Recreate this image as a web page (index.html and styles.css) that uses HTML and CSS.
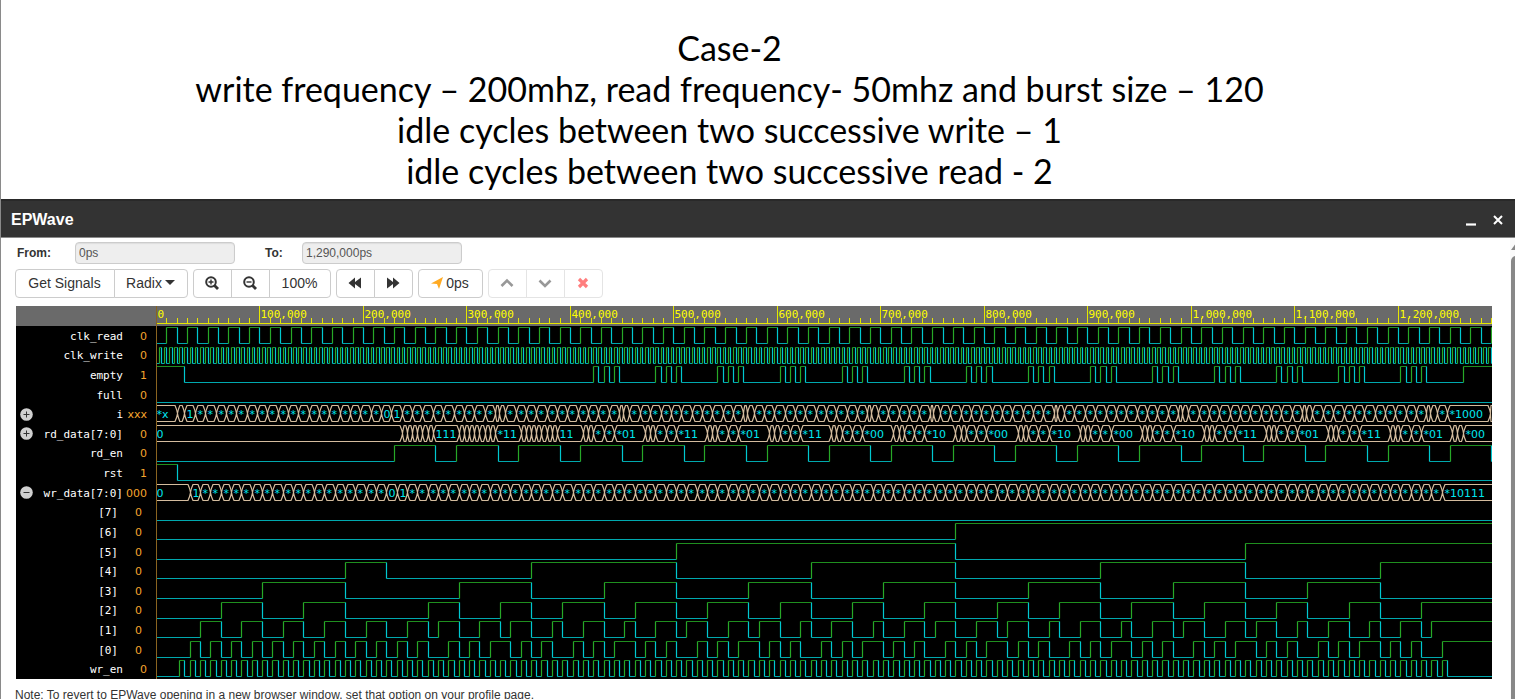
FILE: index.html
```html
<!DOCTYPE html>
<html lang="en">
<head>
<meta charset="utf-8">
<title>EPWave</title>
<link rel="stylesheet" href="styles.css">
</head>
<body>
<div class="page">
  <header class="slide-title">
    <p>Case-2</p>
    <p>write frequency – 200mhz, read frequency- 50mhz and burst size – 120</p>
    <p>idle cycles between two successive write – 1</p>
    <p>idle cycles between two successive read - 2</p>
  </header>

  <div class="titlebar">
    <h1>EPWave</h1>
    <div class="window-actions">
      <button type="button" aria-label="Minimize"><svg width="12" height="16" viewBox="0 0 12 16"><path d="M1 12.500h10" stroke="#fff" stroke-width="2.200"/></svg></button>
      <button type="button" aria-label="Close"><svg width="12" height="16" viewBox="0 0 12 16"><path d="M2 4l8 8M10 4l-8 8" stroke="#fff" stroke-width="2"/></svg></button>
    </div>
  </div>

  <div class="viewer">
    <main class="content">
      <form class="range">
        <label class="from" for="from">From:</label>
        <input id="from" type="text" value="0ps" readonly>
        <label class="to" for="to">To:</label>
        <input id="to" type="text" value="1,290,000ps" readonly>
      </form>

      <div class="toolbar">
        <div class="group">
          <button type="button" class="signals">Get Signals</button>
          <button type="button" class="radix">Radix <span class="caret"></span></button>
        </div>
        <div class="group">
          <button type="button" class="icon" aria-label="Zoom in"><svg width="14" height="14" viewBox="0 0 14 14" fill="none" stroke="#333"><circle cx="6" cy="6" r="4.800" stroke-width="2"/><path d="M9.500 9.500l3.500 3.500" stroke-width="2.800"/><path d="M3.500 6h5M6 3.500v5" stroke-width="1.400"/></svg></button>
          <button type="button" class="icon" aria-label="Zoom out"><svg width="14" height="14" viewBox="0 0 14 14" fill="none" stroke="#333"><circle cx="6" cy="6" r="4.800" stroke-width="2"/><path d="M9.500 9.500l3.500 3.500" stroke-width="2.800"/><path d="M3.500 6h5" stroke-width="1.400"/></svg></button>
          <button type="button" class="percent">100%</button>
        </div>
        <div class="group">
          <button type="button" class="icon" aria-label="Back"><svg width="14" height="14" viewBox="0 0 14 14" fill="#333"><path d="M7 1.500v4.500l6-4.500v11l-6-4.500v4.500l-6.500-5.500z"/></svg></button>
          <button type="button" class="icon" aria-label="Forward"><svg width="14" height="14" viewBox="0 0 14 14" fill="#333"><path d="M7 1.500v4.500l-6-4.500v11l6-4.500v4.500l6.500-5.500z"/></svg></button>
        </div>
        <div class="group">
          <button type="button" class="cursor"><svg width="12" height="12" viewBox="0 0 12 12" fill="#ffaa22"><path d="M12 0l-4 12-2-5-6-0.500z"/></svg>0ps</button>
        </div>
        <div class="group">
          <button type="button" class="icon" disabled aria-label="Previous edge"><svg width="14" height="14" viewBox="0 0 14 14" fill="none" stroke="#333" stroke-width="2.600"><path d="M1.500 10L7 4.500l5.500 5.500"/></svg></button>
          <button type="button" class="icon" disabled aria-label="Next edge"><svg width="14" height="14" viewBox="0 0 14 14" fill="none" stroke="#333" stroke-width="2.600"><path d="M1.500 4.500L7 10l5.500-5.500"/></svg></button>
          <button type="button" class="icon" disabled aria-label="Remove"><svg width="14" height="14" viewBox="0 0 14 14" fill="none" stroke="#f00" stroke-width="3.200"><path d="M3 3l8 8M11 3l-8 8"/></svg></button>
        </div>
      </div>

      <section class="waves">
        <div class="names" id="names"></div>
        <div class="plot" id="plot"></div>
      </section>
      <p class="note">Note: To revert to EPWave opening in a new browser window, set that option on your profile page.</p>
    </main>
    <div class="scroll"><span class="scroll-up"></span><span class="scroll-thumb"></span></div>
  </div>
</div>
<script src="waves.js"></script>
</body>
</html>
```
FILE: styles.css
```css
* { box-sizing: border-box; }
html { height: 100%; overflow: hidden; }
body {
  margin: 0;
  height: 100%;
  overflow: hidden;
  background: #fff;
  color: #333;
  font-family: "Liberation Sans", Arial, sans-serif;
}
p, h1 { margin: 0; }
button, input { font-family: inherit; margin: 0; }
svg { display: block; }

.page { border-left: 1px solid #8a8a8a; min-height: 100%; display: flex; flex-direction: column; }

.slide-title {
  padding: 27px 57px 8px 0;
  text-align: center;
  color: #000;
  font-family: Lato, "Open Sans", sans-serif;
  font-size: 34px;
  line-height: 41px;
}

.titlebar {
  display: flex;
  align-items: center;
  justify-content: space-between;
  height: 39px;
  padding: 1px 11px 0 10px;
  background: #333;
  border-top: 2px solid #292929;
  border-bottom: 1px solid #8a8a8a;
  color: #fff;
}
.titlebar h1 { font-size: 16px; line-height: 20px; }
.window-actions { display: flex; gap: 15px; }
.window-actions button { border: 0; padding: 0; background: none; }

.viewer { display: flex; flex: 1; }
.content { flex: 1; min-width: 0; padding: 4px 18px 0 14px; }

.range { display: flex; align-items: center; font-size: 12px; font-weight: bold; }
.range .from { width: 60px; padding-left: 2px; }
.range .to { width: 67px; padding-left: 30px; }
.range input {
  width: 160px;
  height: 22px;
  padding: 0 3px;
  border: 1px solid #ccc;
  border-radius: 4px;
  background: #eee;
  box-shadow: inset 0 1px 1px #ddd;
  color: #555;
  font-size: 12px;
}

.toolbar { display: flex; gap: 5px; margin-top: 5px; }
.group { display: flex; }
.group button {
  display: flex;
  align-items: center;
  justify-content: center;
  height: 29px;
  padding: 0 1px 2px 0;
  border: 1px solid #ccc;
  background: #fff;
  color: #333;
  font-size: 14px;
  margin-left: -1px;
}
.group button:first-child { margin-left: 0; border-radius: 4px 0 0 4px; }
.group button:last-child { border-radius: 0 4px 4px 0; }
.group button:only-child { border-radius: 4px; }
.group button:disabled { border-color: #e4e4e4; }
.group button:disabled svg { opacity: 0.5; }
.group .signals { width: 100px; }
.group .radix { width: 74px; gap: 3px; }
.group .icon { width: 39px; padding-bottom: 1px; }
.group .percent { width: 62px; }
.group .cursor { width: 65px; gap: 3px; }
.caret { border: 5px solid transparent; border-top: 5px solid #333; border-bottom: 0; }

.waves {
  display: grid;
  grid-template-columns: 140px minmax(0, 1fr);
  height: 373px;
  margin: 8px 0 0 1px;
  background: #000;
}
.names {
  display: grid;
  grid-template-rows: 20px repeat(18, minmax(0, 1fr));
}
.names-head { background: #6a6a6a; }
.row {
  display: grid;
  grid-template-columns: 20px 1fr 24px;
  align-items: center;
  padding: 2px 9px 0 0;
  font-size: 11px;
  line-height: 16px;
  white-space: nowrap;
  color: #fff;
}
.row.bit { padding-right: 14px; }
.row .name { text-align: right; font-family: "DejaVu Sans Mono", monospace; }
.row .value { text-align: right; color: #f5a52d; font-family: "DejaVu Sans", sans-serif; }
.toggle { width: 13px; height: 13px; margin: 0 0 2px 4px; padding: 0; border: 0; background: none; }

.plot { height: 373px; overflow: hidden; }
.plot svg { width: 100%; height: 100%; }
.ruler { fill: #6a6a6a; }
.tick { fill: none; stroke: #e6e600; }
.tick-label { fill: #ffff00; font-family: "DejaVu Sans Mono", monospace; font-size: 11px; }
.high { fill: none; stroke: #1f8f1f; }
.low { fill: none; stroke: #00a8ae; }
.rise { fill: none; stroke: #27a827; stroke-width: 1.2; }
.fall { fill: none; stroke: #00c8d0; stroke-width: 1.2; }
.bus { fill: none; stroke: #d4bc9e; stroke-width: 1.2; }
.bus-text { fill: #00e6f0; font-family: "DejaVu Sans", sans-serif; font-size: 11px; }
.marker { fill: #8a6420; }

.note { margin-top: 9px; font-size: 12px; line-height: 14px; }

.scroll {
  flex: none;
  display: flex;
  flex-direction: column;
  width: 5px;
  padding-left: 1px;
  background: #fafafa;
  overflow: hidden;
}
.scroll-up { width: 10px; height: 7px; margin-top: 5px; background: #888; clip-path: polygon(0 100%, 50% 0, 100% 100%); }
.scroll-thumb { flex: 1; width: 10px; margin-top: 6px; background: #888; border-radius: 5px 5px 0 0; }
```
FILE: waves.js
```javascript
// Times are in units of 10,000 ps.
const END = 129;
const RULER = 20;

const counter = slot => {
  if (slot < 3) return 0;
  if (slot < 22) return slot - 2;
  const s = Math.min(slot, 124);
  return s - 22 + Math.floor((s - 21) / 6);
};

function toggles(start, step, end) {
  const out = [];
  let level = 0;
  for (let t = start; t <= end + 0.001; t += step) {
    level = 1 - level;
    out.push([t, level]);
  }
  return out;
}

function emptyEdges() {
  const out = [[2.75, 0]];
  for (let k = 0; k < 14; k++)
    for (let j = 0; j < 3; j++) {
      out.push([42.25 + 6 * k + j, 1]);
      out.push([42.75 + 6 * k + j, 0]);
    }
  out.push([126.25, 1]);
  return out;
}

function readEnable() {
  const out = [];
  for (let t = 23; t <= END; t += 6) out.push([t, 1], [t + 4, 0]);
  return out;
}

function bitEdges(bit) {
  const out = [];
  let prev = 0;
  for (let s = 3; s <= 124; s++) {
    const v = (counter(s) >> bit) & 1;
    if (v !== prev) out.push([s + 0.25, v]);
    prev = v;
  }
  return out;
}

function writeData() {
  const out = [[0, '0'], [3.25, '1']];
  for (let s = 4; s < 124; s++)
    out.push([s + 0.25, s === 22 ? '0' : s === 23 ? '1' : '*']);
  out.push([124.25, '*10111']);
  return out;
}

function indexData() {
  const out = [[0, '*x'], [2, ''], [2.75, '1']];
  const splits = [33, 45, 57, 69, 75, 87, 99, 111, 123];
  for (let s = 3; s < 124; s++) {
    const split = splits.includes(s + 1);
    out.push([s + 0.75, split ? '' : s === 21 ? '0' : s === 22 ? '1' : '*']);
    // A short glitch, then one unlabelled value until the next step.
    if (split) out.push([s + 1.1, '']);
  }
  out.push([124.75, '*1000'], [128.9, '']);
  return out;
}

function readData() {
  const out = [[0, '0']];
  [[23.75, 26.75, '111'], [29.25, 32.75, '*11'], [35.25, 38.75, '11']].forEach(([a, b, text]) => {
    for (let t = a; t < b; t += 0.5) out.push([t, '']);
    out.push([b, text]);
  });
  const tails = ['01', '11', '01', '11', '00', '10', '00', '10', '00', '10', '11', '01', '11', '01'];
  tails.forEach((tail, k) => {
    const t = 41.25 + 6 * k;
    out.push([t, ''], [t + 0.5, ''], [t + 1, '*'], [t + 2, '*'], [t + 3, '*' + tail]);
  });
  out.push([125.25, ''], [125.75, ''], [126.25, '*00']);
  return out;
}

const signals = [
  { name: 'clk_read', value: '0', edges: toggles(1, 1, END) },
  { name: 'clk_write', value: '0', edges: toggles(0.25, 0.25, END) },
  { name: 'empty', value: '1', start: 1, edges: emptyEdges() },
  { name: 'full', value: '0', edges: [] },
  { name: 'i', value: 'xxx', toggle: '+', bus: indexData() },
  { name: 'rd_data[7:0]', value: '0', toggle: '+', bus: readData() },
  { name: 'rd_en', value: '0', edges: readEnable() },
  { name: 'rst', value: '1', start: 1, edges: [[2, 0]] },
  { name: 'wr_data[7:0]', value: '000', toggle: '-', bus: writeData() },
  ...[7, 6, 5, 4, 3, 2, 1, 0].map(b => ({ name: `[${b}]`, value: '0', bit: true, edges: bitEdges(b) })),
  { name: 'wr_en', value: '0', edges: toggles(2.25, 0.5, 124.75) }
];

function renderNames() {
  document.getElementById('names').innerHTML = '<div class="names-head"></div>' + signals.map(s => {
    const icon = s.toggle
      ? `<button type="button" class="toggle" aria-label="Toggle ${s.name}"><svg width="13" height="13" viewBox="0 0 13 13"><circle cx="6.500" cy="6.500" r="6.300" fill="#d0d0d0"/><path d="M3.500 6.500h6${s.toggle === '+' ? 'M6.500 3.500v6' : ''}" stroke="#333"/></svg></button>`
      : '<span></span>';
    return `<div class="row${s.bit ? ' bit' : ''}">${icon}<span class="name">${s.name}</span><span class="value">${s.value}</span></div>`;
  }).join('');
}

function renderPlot() {
  const plot = document.getElementById('plot');
  const w = plot.clientWidth;
  const h = plot.clientHeight;
  const rowHeight = (h - RULER) / signals.length;
  const X = t => Math.round(t * (w - 1) / END) + 0.5;
  const d = { high: '', low: '', rise: '', fall: '', bus: '' };
  let labels = '';

  signals.forEach((s, row) => {
    const top = Math.round(RULER + row * rowHeight + 1) + 0.5;
    const bottom = top + 16;
    if (s.bus) {
      s.bus.forEach(([t, text], n) => {
        const last = n === s.bus.length - 1;
        const a = X(t);
        const b = last ? w : X(s.bus[n + 1][0]);
        const mid = top + 8;
        const slope = Math.min(2.5, (b - a) / 3);
        [top, bottom].forEach(y => {
          const bend = (y + mid) / 2;
          d.bus += n ? `M${a} ${mid}Q${a + slope / 4} ${bend} ${a + slope} ${y}` : `M0 ${y}`;
          d.bus += last ? `H${w}` : `H${b - slope}Q${b - slope / 4} ${bend} ${b} ${mid}`;
        });
        if (text) labels += `<text class="bus-text" x="${a + (n ? 2 : 0)}" y="${top + 12}">${text}</text>`;
      });
      return;
    }
    let level = s.start || 0;
    let x = 0;
    s.edges.forEach(([t, next]) => {
      const nx = X(t);
      d[level ? 'high' : 'low'] += `M${x} ${level ? top : bottom}H${nx}`;
      d[next ? 'rise' : 'fall'] += `M${nx} ${top}V${bottom}`;
      level = next;
      x = nx;
    });
    d[level ? 'high' : 'low'] += `M${x} ${level ? top : bottom}H${w}`;
  });

  let ticks = `M0 17.500H${w}`;
  for (let t = 0; t <= END; t++) {
    const major = t % 10 === 0;
    ticks += `M${X(t)} ${major ? 0 : 12}V17`;
    if (major) labels += `<text class="tick-label" x="${X(t) + 1}" y="12">${(t * 10000).toLocaleString('en-US')}</text>`;
  }

  plot.innerHTML = `<svg role="img" aria-label="Waveforms"><rect class="ruler" width="${w}" height="${RULER}"/><path class="tick" d="${ticks}"/>` +
    Object.entries(d).map(([k, v]) => `<path class="${k}" d="${v}"/>`).join('') +
    `${labels}<rect class="marker" width="1" height="${h}"/></svg>`;
}

renderNames();
renderPlot();
window.addEventListener('resize', renderPlot);
```
